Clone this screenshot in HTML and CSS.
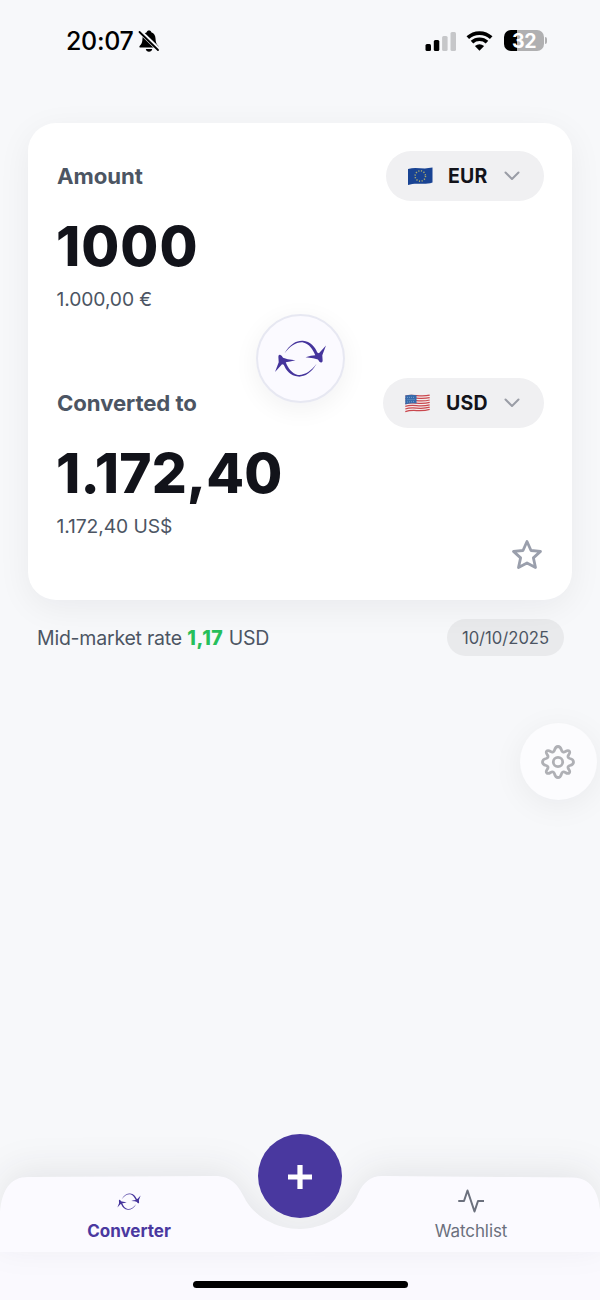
FILE: index.html
```html
<!DOCTYPE html>
<html lang="en">
<head>
<meta charset="utf-8">
<title>Converter</title>
<link rel="stylesheet" href="styles.css">
</head>
<body>
<svg class="defs" width="0" height="0">
  <symbol id="planes" viewBox="80 95 170 128">
    <g id="plane-half">
      <path d="M117 144C134 115 153 105 172 106C195 108 208 124 215 141L220 143L241 120L230 149L231 165Q231 172 226 171Q221 170 217 162L203 158L180 155L196 151L209 149C202 132 191 115 173 111C153 109 134 122 117 144Z"/>
    </g>
    <use href="#plane-half" transform="rotate(180 165 159.500)"/>
  </symbol>
</svg>
<div class="screen">
  <header class="status">
    <div class="clock"><span class="time">20:07</span>
      <svg class="bell" width="22" height="24" viewBox="0 0 22 24"><path d="M11 1.500C9.700 1.500 8.900 2.200 8.700 3.200C5.700 4.100 4.600 6.600 4.500 9.500C4.400 13.500 3.500 15 1.800 16.700C1 17.600 1.300 18.600 2.600 18.600H19.400C20.700 18.600 21 17.600 20.200 16.700C18.500 15 17.600 13.500 17.500 9.500C17.400 6.600 16.300 4.100 13.300 3.200C13.100 2.200 12.300 1.500 11 1.500ZM7.800 20H14.200C13.900 21.800 12.700 22.700 11 22.700S8.100 21.800 7.800 20Z"/><path class="gap" d="M2 2.500L21 21"/><path class="slash" d="M1.500 3L20 21"/></svg>
    </div>
    <div class="signals">
      <svg width="31" height="20" viewBox="0 0 31 20"><rect x=".500" y="13" width="5.500" height="7" rx="1.500"/><rect x="8.800" y="9" width="5.500" height="11" rx="1.500"/><rect class="dim" x="17.100" y="5" width="5.500" height="15" rx="1.500"/><rect class="dim" x="25.500" y="1" width="5.500" height="19" rx="1.500"/></svg>
      <svg width="27" height="20" viewBox="0 0 27 20"><path class="wave" d="M1.800 6.700A17 17 0 0 1 25.200 6.700M6 11.200A11 11 0 0 1 21 11.200"/><path d="M8.900 15.100Q13.500 11.200 18.100 15.100L13.500 19.700Z"/></svg>
      <div class="battery"><div class="cell">32</div><i></i></div>
    </div>
  </header>

  <main>
    <section class="card">
      <div class="row">
        <h2>Amount</h2>
        <button class="currency"><svg class="flag" width="25" height="19" viewBox="0 0 25 19"><path fill="#194393" d="M0 2C8-.4 15 2.700 24.500.600V15.500C16 18.500 8 15 0 18Z"/><circle class="stars" cx="12.300" cy="9" r="5.200"/></svg><span>EUR</span><svg class="chevron" width="16" height="10" viewBox="0 0 16 10"><path d="M1.500 1.500L8 8L14.500 1.500"/></svg></button>
      </div>
      <div class="value amount">1000</div>
      <div class="formatted">1.000,00 €</div>
      <div class="row second">
        <h2 class="to">Converted to</h2>
        <button class="currency usd"><svg class="flag" width="25" height="19" viewBox="0 0 25 19"><path fill="#f5eded" d="M.300 1.500C8-.4 15 2.700 24.700.300V15.500C16 19 8 15 .300 18.500Z"/><path class="stripes" d="M.300 2C8 .1 15 3.200 24.700 1.200M.300 4.600C8 2.500 15 6 24.700 3.600M.300 7C8 5 15 8.500 24.700 6M.300 9.700C8 7.400 15 11 24.700 8.400M.300 12.300C8 9.800 15 13.500 24.700 10.800M.300 15C8 12.200 15 16.100 24.700 13.200M.300 17.700C8 14.600 15 18.500 24.700 15.300"/><path fill="#356aab" d="M.300 1.500C4 .5 8 .5 11.500 1.200V9.500C8 9 4 9.300 .300 10.500Z"/><path class="dots" d="M2 3.400L10 3.300M2.500 5.700L10.500 5.500M2 8L10 7.600"/></svg><span>USD</span><svg class="chevron" width="16" height="10" viewBox="0 0 16 10"><path d="M1.500 1.500L8 8L14.500 1.500"/></svg></button>
      </div>
      <div class="value result">1.172,40</div>
      <div class="formatted dollars">1.172,40 US$</div>
      <button class="swap" aria-label="Swap"><svg width="57" height="43"><use href="#planes"/></svg></button>
      <svg class="star" width="32" height="32" viewBox="0 0 32 32"><path d="M16 2.500L20 11.500L29.500 12.400L22.400 18.900L24.500 28.500L16 24L7.500 28.500L9.600 18.900L2.500 12.400L12 11.500Z"/></svg>
    </section>
    <div class="rate-row">
      <p>Mid-market rate <b>1,17</b> USD</p>
      <span class="date">10/10/2025</span>
    </div>
    <button class="settings" aria-label="Settings"><svg width="36" height="36" viewBox="0 0 36 36"><circle cx="18" cy="18" r="4.700"/><path d="M18 2.500C20.500 2.500 21 4.300 21.500 6.200C22 8 23.700 8.600 25.200 7.600C26.800 6.600 28 5.800 29.300 7.100C30.500 8.400 29.500 9.600 28.500 11.100C27.500 12.600 28 14 29.900 14.500C32 15 33.500 15.700 33.500 18C33.500 20.300 32 21 29.900 21.500C28 22 27.500 23.400 28.500 24.900C29.500 26.400 30.500 27.600 29.300 28.900C28 30.200 26.800 29.400 25.200 28.400C23.700 27.400 22 28 21.500 29.800C21 31.700 20.500 33.500 18 33.500C15.500 33.500 15 31.700 14.500 29.800C14 28 12.300 27.400 10.800 28.400C9.200 29.400 8 30.200 6.700 28.900C5.500 27.600 6.500 26.400 7.500 24.900C8.500 23.400 8 22 6.100 21.500C4 21 2.500 20.300 2.500 18C2.500 15.700 4 15 6.100 14.500C8 14 8.500 12.600 7.500 11.100C6.500 9.600 5.500 8.400 6.700 7.100C8 5.800 9.200 6.600 10.800 7.600C12.300 8.600 14 8 14.500 6.200C15 4.300 15.500 2.500 18 2.500Z"/></svg></button>
  </main>

  <nav class="tabs">
    <svg class="bar" width="600" height="76" viewBox="0 0 600 76"><path d="M0 76V36C2 14 10 1 28 1L215 0C231 0 238 9 244 21C253 40 276 53 300 53C323 53 350 38 358 18C363 7 370 0 382 0L573 1.500C590 2 598 14 600 34V76Z"/></svg>
    <div class="tab active"><svg width="26" height="19"><use href="#planes"/></svg><span>Converter</span></div>
    <button class="add" aria-label="Add"><svg width="24" height="24" viewBox="0 0 24 24"><path d="M12 0V24M0 12H24"/></svg></button>
    <div class="tab watch"><svg class="pulse" width="26" height="24" viewBox="0 0 26 24"><path d="M1 12H6L9.500 1.500L16.500 22.500L20 12H25.500"/></svg><span>Watchlist</span></div>
    <div class="home"></div>
  </nav>
</div>
</body>
</html>
```
FILE: styles.css
```css
* { box-sizing: border-box; }
body { margin: 0; font-family: Inter, "Liberation Sans", sans-serif; background: #f7f8fa; color: #12131a; }
button { font: inherit; color: inherit; border: 0; padding: 0; }
svg { display: block; flex: none; }
.defs { position: absolute; }
.screen { width: 600px; height: 1300px; overflow: hidden; display: flex; flex-direction: column; }

.status { height: 123px; flex: none; padding: 28px 53px 0 66px; display: flex; justify-content: space-between; align-items: flex-start; color: #000; }
.clock { display: flex; align-items: center; gap: 4px; height: 26px; }
.time { font-size: 25px; font-weight: 500; letter-spacing: -.3px; line-height: 26px; }
.bell .gap { stroke: #f7f8fa; stroke-width: 4.5; }
.bell .slash { stroke: #000; stroke-width: 1.8; stroke-linecap: round; }
.signals { display: flex; align-items: center; height: 25px; gap: 10px; }
.dim { fill: #c6c7c9; }
.wave { fill: none; stroke: #000; stroke-width: 3.7; }
.battery { display: flex; align-items: center; gap: 1px; margin-left: 1px; }
.cell { width: 40px; height: 21px; border-radius: 7px; background: linear-gradient(90deg, #000 0 13px, #b0b0b1 13px); color: #fff; font-size: 19.5px; line-height: 22px; font-weight: 650; text-align: center; letter-spacing: -.4px; }
.battery i { width: 2px; height: 7px; border-radius: 0 2px 2px 0; background: #b0b0b1; }

main { flex: 1; display: flex; flex-direction: column; }
.card { position: relative; margin: 0 28px; height: 477px; padding: 28px; border-radius: 28px; background: #fff; box-shadow: 0 8px 34px rgba(20, 25, 35, .06); }
.row { display: flex; align-items: center; justify-content: space-between; height: 50px; }
h2 { margin: 0; padding: 0 0 1px 1px; font-size: 22.2px; font-weight: 650; letter-spacing: -.08px; color: #4c5563; }
h2.to { letter-spacing: -.1px; }
.currency { height: 50px; width: 158px; padding: 0 24px 0 22px; border-radius: 25px; background: #f0f0f2; display: flex; align-items: center; font-size: 19.5px; font-weight: 650; letter-spacing: .2px; }
.currency.usd { width: 161px; }
.currency span { margin-left: 15px; }
.currency.usd span { margin-left: 16px; }
.chevron { margin-left: auto; fill: none; stroke: #9a9da6; stroke-width: 2; stroke-linecap: round; stroke-linejoin: round; }
.stars { fill: none; stroke: #a9a96b; stroke-width: 1.5; stroke-dasharray: 1.2 1.523; }
.stripes { fill: none; stroke: #c9474e; stroke-width: 1.25; }
.dots { fill: none; stroke: #a7c0df; stroke-width: .6; stroke-dasharray: 1 1; }
.value { margin-top: 9px; height: 72px; line-height: 72px; font-size: 55px; font-weight: 830; }
.amount { letter-spacing: 1px; }
.result { letter-spacing: .1px; }
.formatted { margin-top: 3px; height: 28px; line-height: 28px; font-size: 19.3px; letter-spacing: -.1px; color: #4c5563; padding-left: .5px; }
.second { margin-top: 65px; }
.swap { position: absolute; left: 227.5px; top: 190.5px; width: 89px; height: 89px; border-radius: 50%; border: 2px solid #e7e8f2; background: #fbfaff; box-shadow: 0 6px 26px rgba(20, 25, 35, .06); display: grid; place-items: center; }
.swap svg, .active svg { fill: #45349c; }
.star { position: absolute; right: 29px; bottom: 29px; fill: none; stroke: #9a9fac; stroke-width: 2.8; stroke-linejoin: round; }

.rate-row { display: flex; justify-content: space-between; align-items: center; margin: 19px 36px 0 37px; height: 37px; color: #4c5563; }
.rate-row p { margin: 0; font-size: 19.5px; letter-spacing: -.22px; white-space: nowrap; }
.rate-row b { color: #27bf5b; font-weight: 800; letter-spacing: .6px; }
.date { width: 117px; height: 37px; line-height: 38px; border-radius: 19px; background: #e9eaec; font-size: 16.6px; text-align: center; }
.settings { align-self: flex-end; margin: 67px 3px 0 0; width: 77px; height: 77px; border-radius: 39px; background: #fcfcfe; box-shadow: 0 6px 32px rgba(20, 25, 35, .06); display: grid; place-items: center; padding-right: 2px; }
.settings svg { fill: none; stroke: #afb0b5; stroke-width: 2.8; }

.tabs { position: relative; flex: none; height: 124px; display: grid; grid-template-columns: 258px 84px 258px; grid-template-rows: 76px 48px; background: linear-gradient(transparent 76px, #faf9fe 76px); }
.bar { position: absolute; left: 0; top: 0; overflow: visible; fill: #fbfaff; filter: drop-shadow(0 -8px 17px rgba(20, 25, 35, .08)); }
.tab { position: relative; display: flex; flex-direction: column; align-items: center; padding-top: 13px; font-size: 17px; color: #6b707d; }
.tab svg { height: 24px; }
.tab span { line-height: 24px; margin-top: 6px; }
.watch span { letter-spacing: -.1px; }
.active { color: #4a38a0; font-weight: 650; }
.active svg { height: 25px; }
.active span { margin-top: 5px; }
.pulse { fill: none; stroke: #6b707d; stroke-width: 2; stroke-linejoin: round; stroke-linecap: round; }
.add { position: relative; width: 84px; height: 84px; margin-top: -42px; border-radius: 50%; background: #49389f; display: grid; place-items: center; padding-top: 1px; }
.add path { stroke: #fff; stroke-width: 5.2; }
.home { position: relative; grid-column: 1 / 4; justify-self: center; width: 215px; height: 7px; margin-top: 29px; border-radius: 4px; background: #000; }
```
